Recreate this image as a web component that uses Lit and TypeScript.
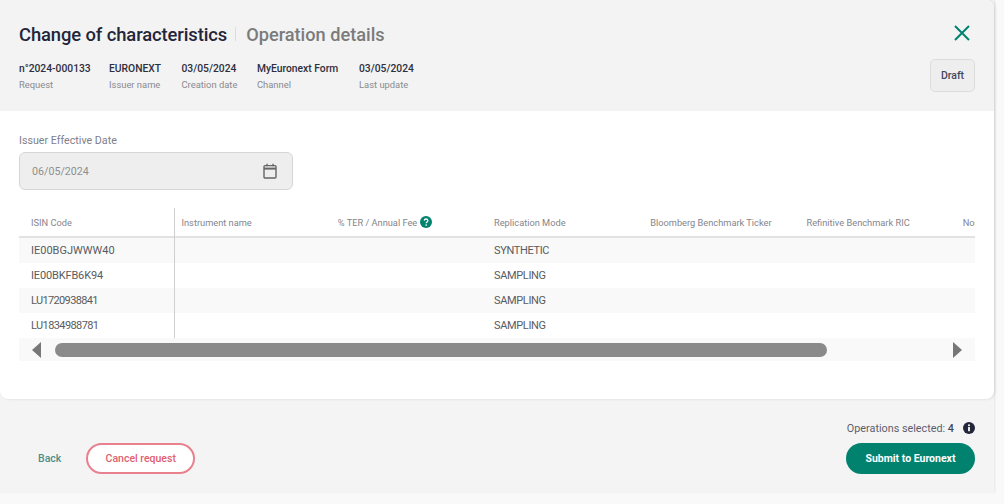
import { LitElement, html, css } from "lit";
import { customElement } from "lit/decorators.js";

const META = [
  ["n°2024-000133", "Request", 90],
  ["EURONEXT", "Issuer name", 72.5],
  ["03/05/2024", "Creation date", 75.5],
  ["MyEuronext Form", "Channel", 102],
  ["03/05/2024", "Last update", 80],
] as const;

const HEADS = ["Instrument name", "% TER / Annual Fee", "Replication Mode", "Bloomberg Benchmark Ticker", "Refinitive Benchmark RIC", "Nominal"];
const ROWS = [
  ["IE00BGJWWW40", "SYNTHETIC", 0],
  ["IE00BKFB6K94", "SAMPLING", -0.15],
  ["LU1720938841", "SAMPLING", -0.65],
  ["LU1834988781", "SAMPLING", -0.6],
] as const;

@customElement("app-root")
export class AppRoot extends LitElement {
  static styles = css`
    :host { display: block; width: 1004px; height: 504px; background: #f9f9f9; overflow: hidden;
      font-family: "Roboto", "Liberation Sans", sans-serif; color: #2a2c3a; }
    * { box-sizing: border-box; }
    .page { width: 994px; height: 492px; background: #f4f4f4; display: flex; flex-direction: column;
      box-shadow: 1px 0 2px rgba(0,0,0,.08); }
    .card { height: 399px; background: #fff; border-radius: 8px; display: flex; flex-direction: column; overflow: hidden;
      box-shadow: 1px 0 3px rgba(0,0,0,.12); }
    .top { height: 111px; background: #f3f3f3; padding: 23px 19px 0 19px; display: flex; justify-content: space-between; }
    .titles { display: flex; align-items: center; height: 22px; font-size: 18.4px; font-weight: 500; }
    .title { color: #23253a; letter-spacing: -.1px; }
    .sep { width: 1px; height: 14px; background: #dcdcdc; margin: 0 10px 0 8px; }
    .sub { color: #7b7b7b; font-size: 18.2px; }
    .meta { display: flex; margin-top: 17px; }
    .m { display: flex; flex-direction: column; gap: 4px; }
    .mv { font-size: 10.3px; font-weight: 500; line-height: 13px; color: #2e2f3d; white-space: nowrap; }
    .ml { font-size: 9.4px; line-height: 12px; color: #8a8a8f; white-space: nowrap; }
    .right { display: flex; flex-direction: column; align-items: flex-end; }
    .close { width: 16px; height: 16px; margin: 2px 5px 0 0; display: block; }
    .draft { margin-top: 18px; width: 45px; height: 33px; border: 1px solid #dcdcdc; border-radius: 5px; background: #eeeeee;
      font-size: 10.5px; color: #43455a; display: flex; align-items: center; justify-content: center; font-weight: 500; }
    .body { flex: 1; padding: 23px 19px 0; }
    .lab { font-size: 10.7px; line-height: 14px; color: #80808a; }
    .date { margin-top: 4px; width: 274px; height: 38px; background: #eeeeee; border: 1px solid #d6d6d6; border-radius: 6px;
      display: flex; align-items: center; justify-content: space-between; padding: 0 14px 0 12px; font-size: 10.7px; color: #8f8f8f; }
    .date svg { width: 16px; height: 16px; display: block; }
    .table { margin-top: 18px; width: 956px; overflow: hidden; }
    .row { display: flex; height: 25px; align-items: center; font-size: 11px; color: #5a5b60; white-space: nowrap; }
    .row.odd { background: #f9f9f9; }
    .row.head { height: 30px; border-bottom: 2px solid #e2e2e2; font-size: 9.25px; color: #85858c; }
    .first { width: 156px; flex: none; padding-left: 12px; height: 100%; display: flex; align-items: center; border-right: 1px solid #cfcfcf; }
    .head .first { height: 30px; margin-bottom: -2px; padding-bottom: 2px; }
    .c { width: 156.25px; flex: none; padding-left: 6.5px; height: 100%; display: flex; align-items: center; gap: 3px; }
    .val { letter-spacing: -.35px; }
    .help { width: 12px; height: 12px; display: block; }
    .scroll { height: 23px; background: #f9f9f9; display: flex; align-items: center; padding: 0 13px 0 13px; gap: 13px; }
    .thumb { width: 772px; height: 14px; border-radius: 7px; background: #8a8a8a; }
    .gap { flex: 1; }
    .arrow { width: 10px; height: 16px; display: block; flex: none; }
    .foot { flex: 1; padding: 21px 19px 18px 19px; display: flex; justify-content: space-between; align-items: flex-end; }
    .left { display: flex; align-items: center; gap: 25px; }
    .back { font-size: 10.5px; font-weight: 500; color: #4a8f88; padding-left: 19px; }
    .cancel { width: 109px; height: 31px; border: 2px solid #e8808d; border-radius: 16px; background: #fff; color: #e0606e;
      font-size: 10.5px; font-weight: 500; display: flex; align-items: center; justify-content: center; }
    .rt { display: flex; flex-direction: column; align-items: flex-end; gap: 9px; }
    .ops { display: flex; align-items: center; font-size: 10.8px; color: #5d5e6d; gap: 9px; height: 12px; }
    .ops b { font-weight: 500; color: #44455a; }
    .info { width: 12px; height: 12px; display: block; }
    .submit { width: 129px; height: 31px; border-radius: 16px; background: #00826f; color: #fff; font-size: 10.5px; font-weight: 700;
      display: flex; align-items: center; justify-content: center; }
  `;

  render() {
    return html`<div class="page">
      <div class="card">
        <div class="top">
          <div>
            <div class="titles"><span class="title">Change of characteristics</span><span class="sep"></span><span class="sub">Operation details</span></div>
            <div class="meta">
              ${META.map(([v, l, w]) => html`<div class="m" style="width:${w}px"><span class="mv">${v}</span><span class="ml">${l}</span></div>`)}
            </div>
          </div>
          <div class="right">
            <svg class="close" viewBox="0 0 16 16"><path d="M1 1l14 14M15 1L1 15" stroke="#00826f" stroke-width="2" fill="none"/></svg>
            <div class="draft">Draft</div>
          </div>
        </div>
        <div class="body">
          <div class="lab">Issuer Effective Date</div>
          <div class="date"><span>06/05/2024</span>
            <svg viewBox="0 0 16 16" fill="none" stroke="#666" stroke-width="1.4"><rect x="2" y="2.6" width="12" height="12.4" rx="1"/><path d="M2 5.6h12" stroke-width="2"/><path d="M5 .8v2.4M11 .8v2.4"/></svg>
          </div>
          <div class="table">
            <div class="row head">
              <div class="first">ISIN Code</div>
              ${HEADS.map((h, i) => html`<div class="c">${h}${i === 1 ? html`<svg class="help" viewBox="0 0 12 12"><circle cx="6" cy="6" r="6" fill="#00826f"/><path d="M4.2 4.6C4.3 3.5 5 3 6 3s1.9.6 1.9 1.6c0 1.3-1.7 1.4-1.7 2.6" stroke="#fff" stroke-width="1.3" fill="none"/><circle cx="6.2" cy="9" r=".85" fill="#fff"/></svg>` : ""}</div>`)}
            </div>
            ${ROWS.map((r, i) => html`<div class="row ${i % 2 === 0 ? "odd" : ""}">
              <div class="first"><span style="letter-spacing:${r[2]}px">${r[0]}</span></div><div class="c"></div><div class="c"></div><div class="c val">${r[1]}</div>
            </div>`)}
            <div class="scroll">
              <svg class="arrow" viewBox="0 0 10 16"><path d="M9 0v16L0 8z" fill="#777"/></svg>
              <div class="thumb"></div><div class="gap"></div>
              <svg class="arrow" viewBox="0 0 10 16"><path d="M1 0v16l9-8z" fill="#777"/></svg>
            </div>
          </div>
        </div>
      </div>
      <div class="foot">
        <div class="left"><span class="back">Back</span><div class="cancel">Cancel request</div></div>
        <div class="rt">
          <div class="ops"><span>Operations selected: <b>4</b></span>
            <svg class="info" viewBox="0 0 12 12"><circle cx="6" cy="6" r="6" fill="#23253a"/><rect x="5.1" y="5" width="1.8" height="4.2" fill="#fff"/><circle cx="6" cy="3.3" r="1" fill="#fff"/></svg>
          </div>
          <div class="submit">Submit to Euronext</div>
        </div>
      </div>
    </div>`;
  }
}
